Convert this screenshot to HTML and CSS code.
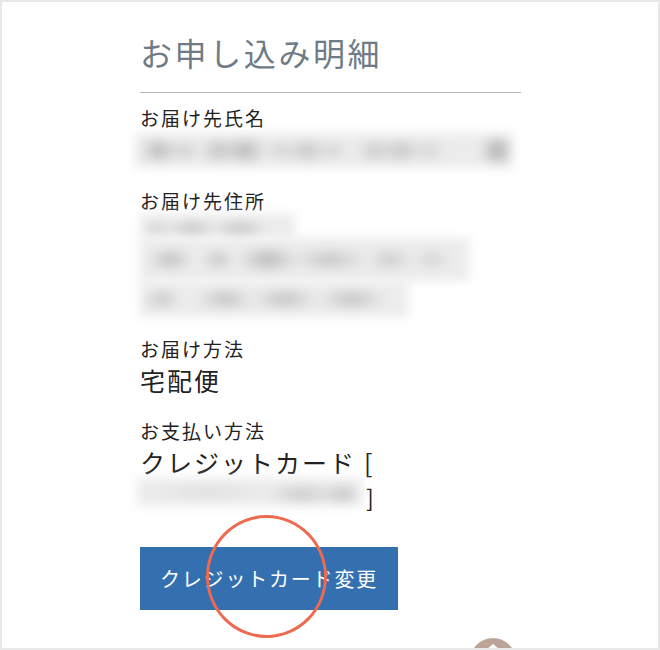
FILE: index.html
```html
<!DOCTYPE html>
<html lang="ja">
<head>
<meta charset="utf-8">
<title>お申し込み明細</title>
<link rel="stylesheet" href="styles.css">
</head>
<body>
<div class="frame">
  <div class="content">
    <h1 class="title">お申し込み明細</h1>
    <div class="rule"></div>

    <div class="label label-first">お届け先氏名</div>
    <div class="redact redact-name" aria-label="氏名（非表示）"></div>

    <div class="label label-gap">お届け先住所</div>
    <div class="redact-addr" aria-label="住所（非表示）">
      <div class="redact addr-line1"></div>
      <div class="redact addr-line2"></div>
      <div class="redact addr-line3"></div>
    </div>

    <div class="label label-gap3">お届け方法</div>
    <div class="value">宅配便</div>

    <div class="label label-gap2">お支払い方法</div>
    <div class="value">クレジットカード<span class="open">[</span></div>
    <div class="card-row">
      <div class="redact redact-card" aria-label="カード番号（非表示）"></div>
      <span class="bracket">]</span>
    </div>

    <button class="btn" type="button">クレジットカード変更</button>
  </div>

  <div class="highlight"></div>
  <div class="pagetop">
    <svg width="46" height="46" viewBox="0 0 46 46"><path d="M16 14 L23 8 L30 14" fill="none" stroke="#fff" stroke-width="3"/></svg>
  </div>
</div>
</body>
</html>
```

FILE: styles.css
```css
* { box-sizing: border-box; }
html, body { margin: 0; padding: 0; background: #fff; }
body {
  font-family: "Noto Sans CJK JP", "Noto Sans", sans-serif;
  color: #222;
}
.frame {
  position: relative;
  width: 660px;
  height: 650px;
  border: 2px solid #e8e8e8;
  overflow: hidden;
  background: #fff;
}
.content {
  margin-left: 138px;
  width: 381px;
}
.title {
  margin: 26px 0 0;
  font-size: 32px;
  line-height: 48px;
  font-weight: 400;
  letter-spacing: 2.6px;
  color: #6f7b86;
}
.rule {
  margin-top: 16px;
  height: 1px;
  background: #b5b5b5;
}
.label {
  font-size: 19px;
  line-height: 27px;
  letter-spacing: 2px;
  color: #222;
}
.label-first { margin-top: 11px; }
.label-gap { margin-top: 19px; }
.label-gap3 { margin-top: 18px; }
.label-gap2 { margin-top: 19px; }
.value {
  font-size: 25px;
  line-height: 36px;
  letter-spacing: 2px;
  color: #222;
}
.open { margin-left: 8px; letter-spacing: 0; }

.redact {
  filter: blur(5px);
  background-color: #ececec;
}
.redact-name {
  margin-top: 2px;
  margin-left: -5px;
  width: 378px;
  height: 35px;
  background-image:
    radial-gradient(ellipse 20px 14px at 24px 50%, #b8b8b8, transparent),
    radial-gradient(ellipse 16px 11px at 50px 50%, #cccccc, transparent),
    radial-gradient(ellipse 20px 14px at 84px 50%, #c0c0c0, transparent),
    radial-gradient(ellipse 22px 15px at 110px 50%, #b6b6b6, transparent),
    radial-gradient(ellipse 18px 10px at 146px 50%, #d0d0d0, transparent),
    radial-gradient(ellipse 24px 13px at 172px 50%, #c6c6c6, transparent),
    radial-gradient(ellipse 16px 10px at 198px 50%, #d2d2d2, transparent),
    radial-gradient(ellipse 20px 13px at 240px 50%, #cacaca, transparent),
    radial-gradient(ellipse 22px 13px at 266px 50%, #c4c4c4, transparent),
    radial-gradient(ellipse 18px 11px at 294px 50%, #d4d4d4, transparent),
    radial-gradient(ellipse 18px 17px at 362px 50%, #aeaeae, transparent);
}
.redact-addr { width: 330px; }
.addr-line1 {
  width: 155px;
  height: 24px;
  background-image:
    radial-gradient(ellipse 16px 10px at 18px 60%, #d2d2d2, transparent),
    radial-gradient(ellipse 26px 11px at 52px 62%, #c6c6c6, transparent),
    radial-gradient(ellipse 28px 11px at 100px 62%, #c4c4c4, transparent);
}
.addr-line2 {
  width: 329px;
  height: 43px;
  background-image:
    radial-gradient(ellipse 24px 13px at 30px 50%, #c0c0c0, transparent),
    radial-gradient(ellipse 18px 11px at 78px 50%, #c4c4c4, transparent),
    radial-gradient(ellipse 32px 14px at 128px 50%, #b8b8b8, transparent),
    radial-gradient(ellipse 40px 12px at 190px 50%, #c4c4c4, transparent),
    radial-gradient(ellipse 24px 12px at 250px 50%, #cacaca, transparent),
    radial-gradient(ellipse 20px 11px at 292px 50%, #d2d2d2, transparent);
}
.addr-line3 {
  width: 268px;
  height: 36px;
  background-image:
    radial-gradient(ellipse 20px 11px at 22px 50%, #c6c6c6, transparent),
    radial-gradient(ellipse 30px 12px at 85px 50%, #c2c2c2, transparent),
    radial-gradient(ellipse 34px 12px at 145px 50%, #c2c2c2, transparent),
    radial-gradient(ellipse 36px 12px at 212px 50%, #c2c2c2, transparent);
}
.card-row {
  margin-top: -2px;
  display: flex;
  align-items: flex-start;
}
.redact-card {
  margin-left: -3px;
  width: 225px;
  height: 28px;
  background-image:
    radial-gradient(ellipse 60px 10px at 70px 50%, #e0e0e0, transparent),
    radial-gradient(ellipse 38px 12px at 165px 58%, #cccccc, transparent),
    radial-gradient(ellipse 20px 12px at 205px 58%, #c4c4c4, transparent);
}
.bracket {
  margin-left: 4px;
  margin-top: 2px;
  font-size: 23px;
  line-height: 34px;
  color: #222;
}
.btn {
  display: block;
  margin-top: 33px;
  width: 258px;
  height: 63px;
  border: none;
  border-radius: 0;
  background: #3470b0;
  color: #fff;
  font-family: "Noto Sans CJK JP", "Noto Sans", sans-serif;
  font-size: 20px;
  letter-spacing: 1.8px;
  text-align: center;
  padding: 0;
}
.highlight {
  position: absolute;
  left: 204px;
  top: 513px;
  width: 121px;
  height: 123px;
  border: 3px solid #ec6a50;
  border-radius: 50%;
}
.pagetop {
  position: absolute;
  left: 468px;
  top: 636px;
  width: 46px;
  height: 46px;
  border-radius: 50%;
  background: #bba599;
}
.pagetop svg { display: block; }
```
